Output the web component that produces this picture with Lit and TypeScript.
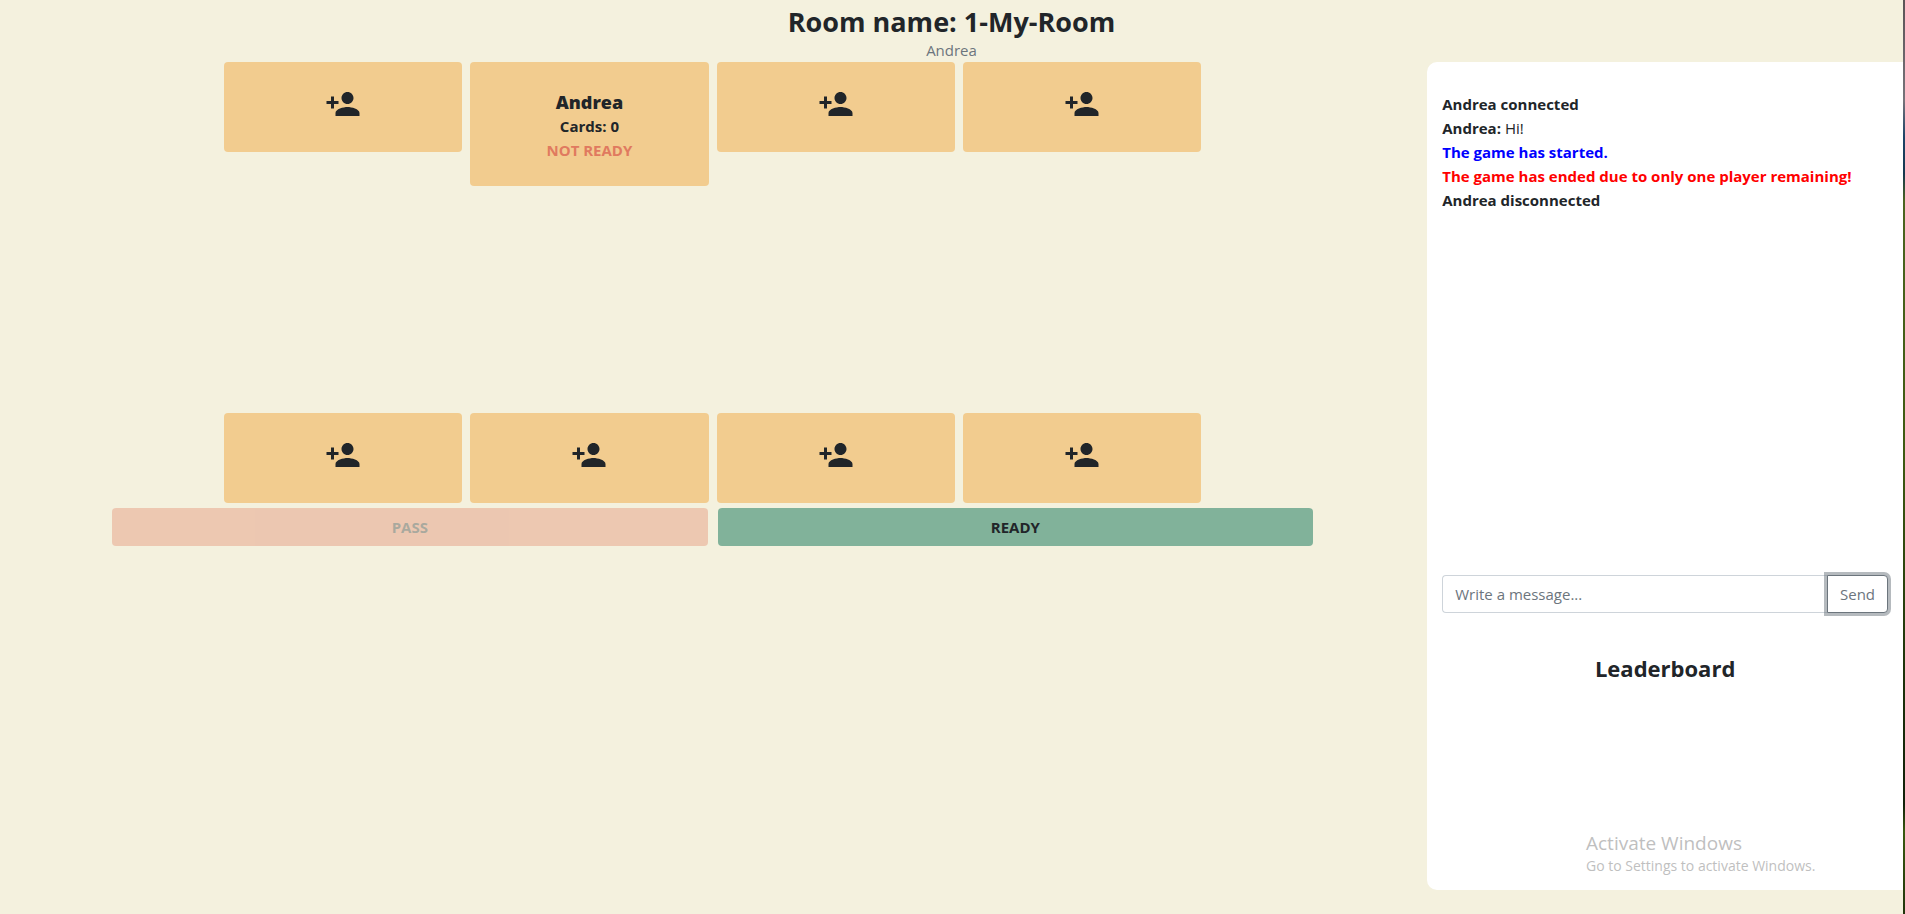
import { LitElement, html, css, svg } from "lit";
import { customElement, state } from "lit/decorators.js";

interface Player {
  name: string;
  cards: number;
  ready: boolean;
}

interface Message {
  text: string;
  author?: string;
  kind?: "start" | "end";
}

const personAdd = svg`<path d="M15 12c2.21 0 4-1.79 4-4s-1.79-4-4-4-4 1.79-4 4 1.79 4 4 4zm-9-2V7H4v3H1v2h3v3h2v-3h3v-2H6zm9 4c-2.67 0-8 1.34-8 4v2h16v-2c0-2.66-5.33-4-8-4z"/>`;

@customElement("app-root")
export class AppRoot extends LitElement {
  @state() private top: (Player | null)[] = [
    null,
    { name: "Andrea", cards: 0, ready: false },
    null,
    null,
  ];
  @state() private bottom: (Player | null)[] = [null, null, null, null];
  @state() private messages: Message[] = [
    { text: "Andrea connected" },
    { author: "Andrea:", text: "Hi!" },
    { text: "The game has started.", kind: "start" },
    { text: "The game has ended due to only one player remaining!", kind: "end" },
    { text: "Andrea disconnected" },
  ];

  static styles = css`
    :host {
      display: flex;
      min-height: 100vh;
      background: #f4f1de;
      color: #212529;
      font-family: "Open Sans", "Noto Sans", sans-serif;
      font-size: 15px;
      line-height: 24px;
    }
    * {
      box-sizing: border-box;
    }
    .page {
      flex: 1;
      min-width: 0;
    }
    .edge {
      width: 2px;
      background: linear-gradient(#5b5456 0%, #77737a 11%, #1d4468 15%, #16384f 19%, #4c6420 22%, #3f5a12 50%, #1c300a 75%, #12200a 88%, #3a5a10 91%, #22340c 100%);
    }
    header {
      padding-top: 6px;
      text-align: center;
    }
    h1 {
      margin: 0;
      font-size: 27px;
      line-height: 32px;
      font-weight: 700;
    }
    .user {
      margin: 0;
      color: #6c757d;
    }
    .columns {
      display: grid;
      grid-template-columns: 3fr 1fr;
      align-items: start;
    }
    .table {
      padding: 0 8% 0 7.85%;
    }
    .seats {
      display: grid;
      grid-template-columns: repeat(4, 1fr);
      gap: 8px;
      align-items: start;
      padding: 0 9.33%;
    }
    .play-area {
      height: 227px;
    }
    .seat {
      display: flex;
      flex-direction: column;
      align-items: center;
      min-height: 90px;
      padding: 24px 16px;
      border-radius: 4px;
      background: #f2cc8f;
      font-weight: 700;
    }
    .taken {
      padding-top: 28px;
    }
    .seat svg {
      width: 36px;
      height: 36px;
      fill: #212529;
    }
    .name {
      font-size: 18px;
      font-weight: 800;
    }
    .status {
      color: #e07a5f;
    }
    .actions {
      display: grid;
      grid-template-columns: 1fr 1fr;
      gap: 10px;
      margin-top: 5px;
    }
    button,
    input {
      font: inherit;
      height: 38px;
      margin: 0;
    }
    .action {
      border: 0;
      border-radius: 4px;
      color: #212529;
      font-weight: 700;
    }
    .pass {
      background: #e07a5f;
    }
    .ready {
      background: #81b29a;
    }
    .action:disabled {
      opacity: 0.35;
    }
    .side {
      position: relative;
      height: calc(100vh - 86px);
      padding: 30px 15px 0;
      border-radius: 10px 0 0 10px;
      background: #fff;
    }
    .log {
      height: 483px;
      margin: 0;
      padding: 0;
      list-style: none;
      overflow: auto;
    }
    .start {
      color: #00f;
    }
    .end {
      color: #f00;
    }
    .compose {
      display: flex;
    }
    .compose input {
      flex: 1;
      min-width: 0;
      padding: 0 12px;
      border: 1px solid #ced4da;
      border-right: 0;
      border-radius: 4px 0 0 4px;
      background: #fff;
      color: #495057;
      outline: 0;
    }
    .compose input::placeholder {
      color: #6c757d;
      opacity: 1;
    }
    .send {
      width: 61px;
      padding: 0;
      border: 1px solid #6c757d;
      border-radius: 0 4px 4px 0;
      background: #fff;
      color: #6c757d;
      box-shadow: 0 0 0 3px rgba(108, 117, 125, 0.5);
    }
    h2 {
      margin: 39px 0 0;
      font-size: 22px;
      line-height: 32px;
      font-weight: 700;
      text-align: center;
    }
    .activate {
      position: absolute;
      right: 82px;
      bottom: 14px;
      width: 235px;
      color: #bfbfbf;
      font-size: 14px;
      line-height: 20px;
      white-space: nowrap;
    }
    .activate strong {
      display: block;
      font-size: 19px;
      line-height: 26px;
      font-weight: 400;
    }
  `;

  private seat(player: Player | null) {
    return player
      ? html`<div class="seat taken">
          <span class="name">${player.name}</span>
          <span>Cards: ${player.cards}</span>
          <span class="status">${player.ready ? "READY" : "NOT READY"}</span>
        </div>`
      : html`<div class="seat"><svg viewBox="0 0 24 24" aria-hidden="true">${personAdd}</svg></div>`;
  }

  render() {
    return html`
      <div class="page">
        <header>
          <h1>Room name: 1-My-Room</h1>
          <p class="user">Andrea</p>
        </header>
        <div class="columns">
          <main class="table">
            <div class="seats">${this.top.map((p) => this.seat(p))}</div>
            <div class="play-area"></div>
            <div class="seats">${this.bottom.map((p) => this.seat(p))}</div>
            <div class="actions">
              <button class="action pass" disabled>PASS</button>
              <button class="action ready">READY</button>
            </div>
          </main>
          <aside class="side">
            <ul class="log">
              ${this.messages.map(
                (m) => html`<li class=${m.kind ?? ""}>
                  ${m.author ? html`<b>${m.author}</b> ${m.text}` : html`<b>${m.text}</b>`}
                </li>`
              )}
            </ul>
            <form class="compose" @submit=${(e: Event) => e.preventDefault()}>
              <input type="text" aria-label="Message" placeholder="Write a message..." />
              <button class="send" type="submit">Send</button>
            </form>
            <h2>Leaderboard</h2>
            <div class="activate">
              <strong>Activate Windows</strong>
              Go to Settings to activate Windows.
            </div>
          </aside>
        </div>
      </div>
      <div class="edge"></div>
    `;
  }
}
